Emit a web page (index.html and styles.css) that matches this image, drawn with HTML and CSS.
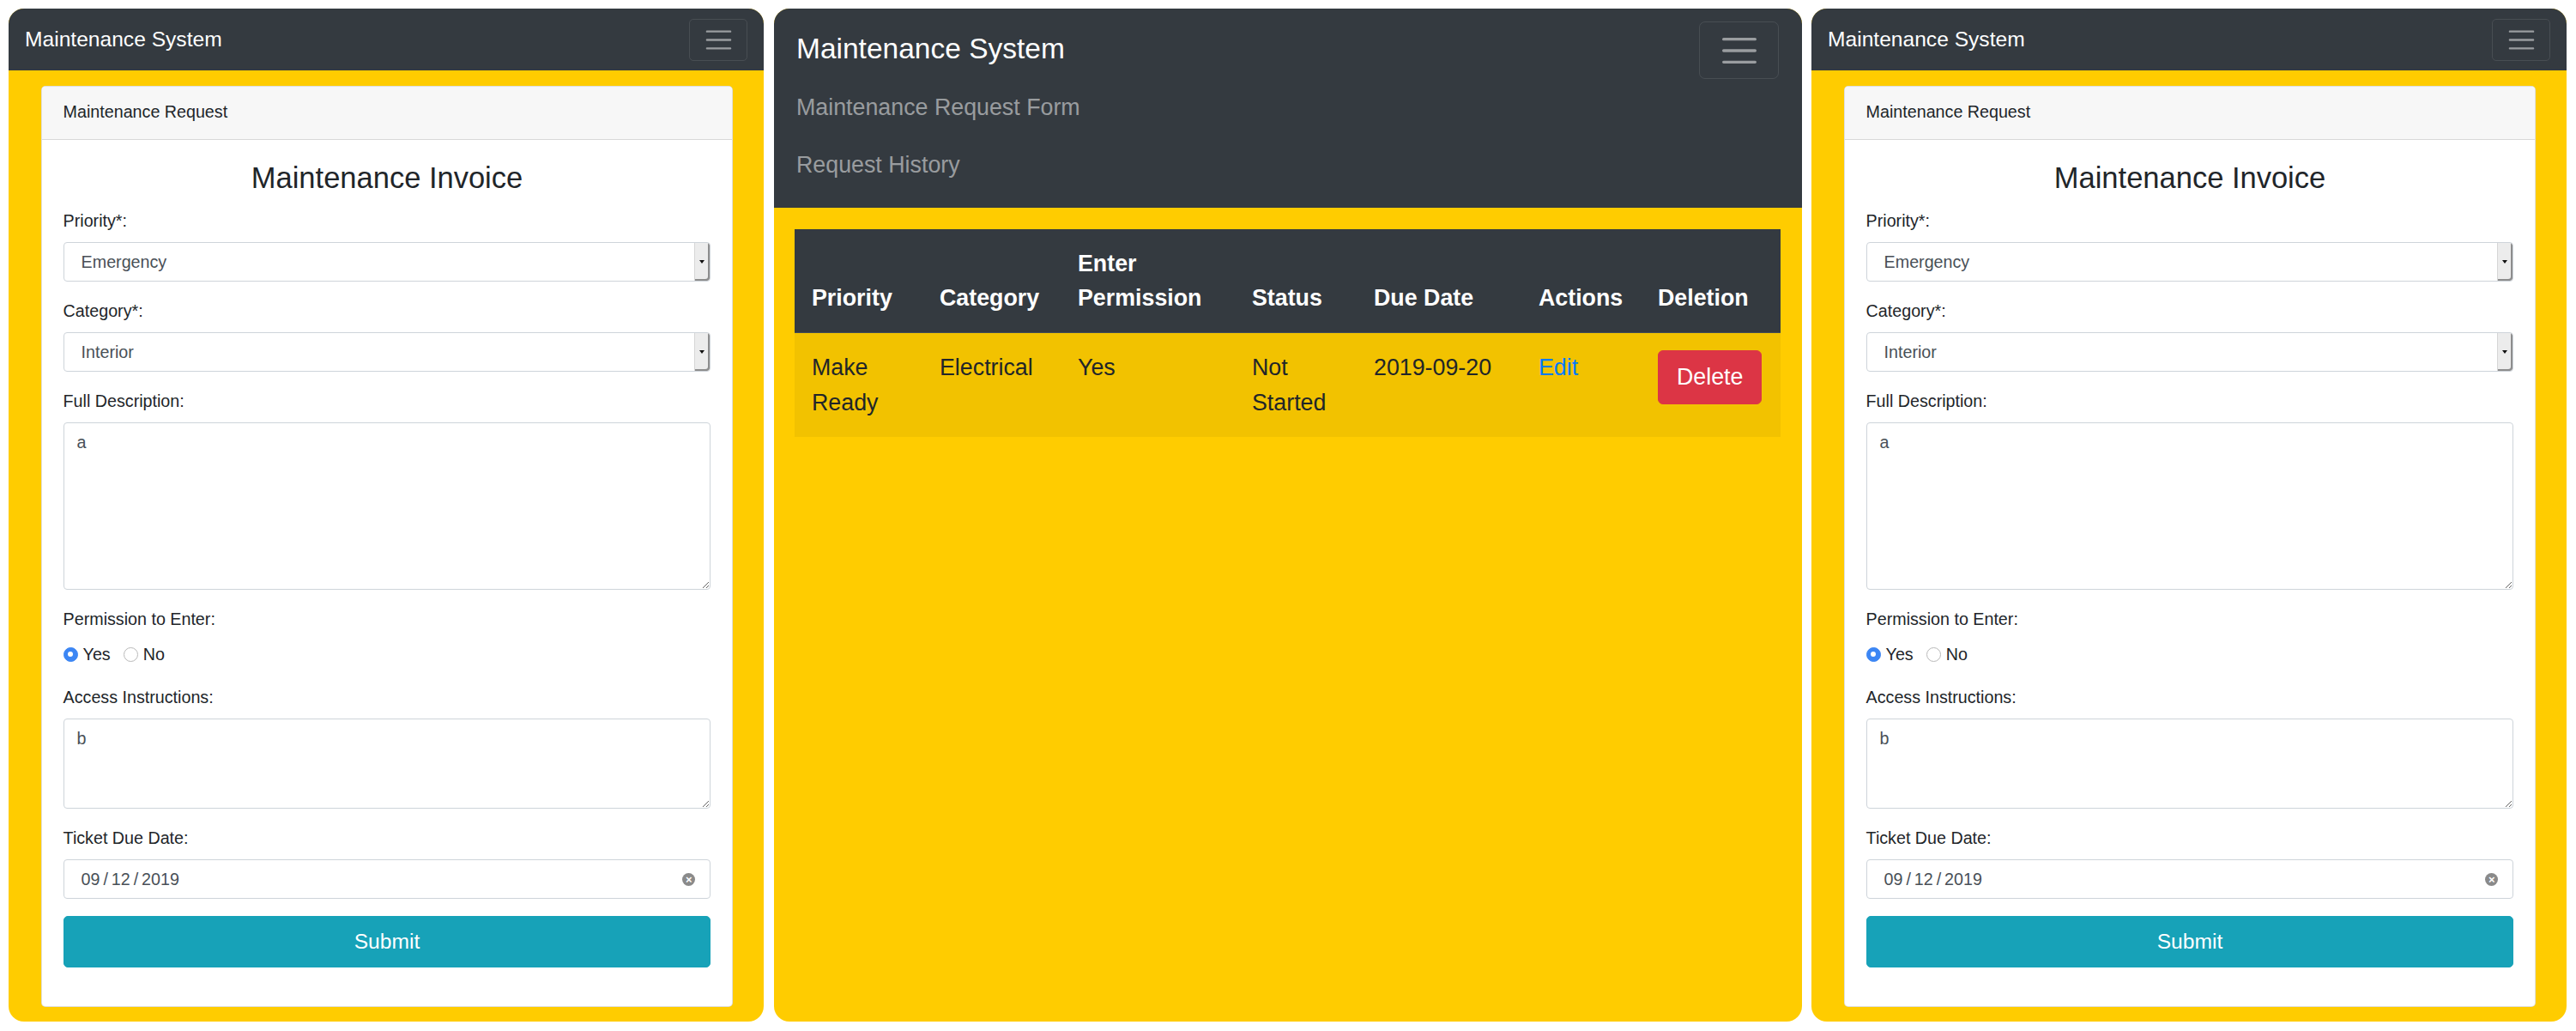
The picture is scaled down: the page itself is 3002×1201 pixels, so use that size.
FILE: index.html
```html
<!DOCTYPE html>
<html lang="en">
<head>
<meta charset="utf-8">
<title>Maintenance System</title>
<link rel="stylesheet" href="styles.css">
</head>
<body>
<div class="screens">

  <section class="phone">
    <nav class="navbar">
      <span class="brand">Maintenance System</span>
      <span class="toggler"><svg class="toggler-icon" viewBox="0 0 30 30"><path d="M4 7h22M4 15h22M4 23h22"/></svg></span>
    </nav>
    <main class="phone-body">
      <div class="card">
        <div class="card-header">Maintenance Request</div>
        <div class="card-body">
          <h3 class="title">Maintenance Invoice</h3>
          <div class="group">
            <div class="label">Priority*:</div>
            <div class="select"><span class="select-value">Emergency</span><span class="select-btn"><span class="arrow"></span></span></div>
          </div>
          <div class="group">
            <div class="label">Category*:</div>
            <div class="select"><span class="select-value">Interior</span><span class="select-btn"><span class="arrow"></span></span></div>
          </div>
          <div class="group">
            <div class="label">Full Description:</div>
            <textarea class="textarea tall" readonly>a</textarea>
          </div>
          <div class="group">
            <div class="label">Permission to Enter:</div>
            <div class="radios">
              <span class="radio checked"></span><span class="radio-label">Yes</span>
              <span class="radio"></span><span class="radio-label">No</span>
            </div>
          </div>
          <div class="group">
            <div class="label">Access Instructions:</div>
            <textarea class="textarea short" readonly>b</textarea>
          </div>
          <div class="group">
            <div class="label">Ticket Due Date:</div>
            <div class="date"><span class="date-value">09&#8201;/&#8201;12&#8201;/&#8201;2019</span><span class="clear">&#215;</span></div>
          </div>
          <div class="submit">Submit</div>
        </div>
      </div>
    </main>
  </section>

  <section class="tablet">
    <nav class="navbar-lg">
      <div class="nav-top">
        <span class="brand-lg">Maintenance System</span>
        <span class="toggler-lg"><svg class="toggler-icon-lg" viewBox="0 0 30 30"><path d="M4 7h22M4 15h22M4 23h22"/></svg></span>
      </div>
      <div class="nav-link">Maintenance Request Form</div>
      <div class="nav-link">Request History</div>
    </nav>
    <main class="tablet-body">
      <table class="table">
        <thead>
          <tr>
            <th class="c1">Priority</th>
            <th class="c2">Category</th>
            <th class="c3">Enter Permission</th>
            <th class="c4">Status</th>
            <th class="c5">Due Date</th>
            <th class="c6">Actions</th>
            <th class="c7">Deletion</th>
          </tr>
        </thead>
        <tbody>
          <tr>
            <td>Make Ready</td>
            <td>Electrical</td>
            <td>Yes</td>
            <td>Not Started</td>
            <td>2019-09-20</td>
            <td><span class="edit">Edit</span></td>
            <td><span class="delete">Delete</span></td>
          </tr>
        </tbody>
      </table>
    </main>
  </section>

  <section class="phone">
    <nav class="navbar">
      <span class="brand">Maintenance System</span>
      <span class="toggler"><svg class="toggler-icon" viewBox="0 0 30 30"><path d="M4 7h22M4 15h22M4 23h22"/></svg></span>
    </nav>
    <main class="phone-body">
      <div class="card">
        <div class="card-header">Maintenance Request</div>
        <div class="card-body">
          <h3 class="title">Maintenance Invoice</h3>
          <div class="group">
            <div class="label">Priority*:</div>
            <div class="select"><span class="select-value">Emergency</span><span class="select-btn"><span class="arrow"></span></span></div>
          </div>
          <div class="group">
            <div class="label">Category*:</div>
            <div class="select"><span class="select-value">Interior</span><span class="select-btn"><span class="arrow"></span></span></div>
          </div>
          <div class="group">
            <div class="label">Full Description:</div>
            <textarea class="textarea tall" readonly>a</textarea>
          </div>
          <div class="group">
            <div class="label">Permission to Enter:</div>
            <div class="radios">
              <span class="radio checked"></span><span class="radio-label">Yes</span>
              <span class="radio"></span><span class="radio-label">No</span>
            </div>
          </div>
          <div class="group">
            <div class="label">Access Instructions:</div>
            <textarea class="textarea short" readonly>b</textarea>
          </div>
          <div class="group">
            <div class="label">Ticket Due Date:</div>
            <div class="date"><span class="date-value">09&#8201;/&#8201;12&#8201;/&#8201;2019</span><span class="clear">&#215;</span></div>
          </div>
          <div class="submit">Submit</div>
        </div>
      </div>
    </main>
  </section>

</div>
</body>
</html>
```

FILE: styles.css
```css
* { box-sizing: border-box; }

html, body {
  margin: 0;
  padding: 0;
  background: #ffffff;
}

body {
  font-family: "Liberation Sans", Arial, sans-serif;
  color: #212529;
  padding: 10px 11px 11px 10px;
}

.screens {
  display: flex;
  align-items: stretch;
  height: 1180px;
}

/* ---------- side (phone) panels ---------- */
.phone {
  width: 880px;
  flex: 0 0 880px;
  height: 1180px;
  border-radius: 18px;
  overflow: hidden;
  background: #ffcc00;
  display: flex;
  flex-direction: column;
  font-size: 19.7px;
  line-height: 1.5;
}

.phone + .tablet { margin-left: 12px; }
.tablet + .phone { margin-left: 11px; }

.navbar {
  background: #343a40;
  height: 72px;
  padding: 12px 19px 11px 19px;
  display: flex;
  align-items: center;
  justify-content: space-between;
}

.brand {
  color: #ffffff;
  font-size: 24.6px;
  line-height: 37px;
  margin-top: -3px;
}

.toggler {
  width: 68px;
  height: 49px;
  border: 1px solid rgba(255, 255, 255, 0.1);
  border-radius: 5px;
  display: flex;
  align-items: center;
  justify-content: center;
}

.toggler-icon {
  width: 37px;
  height: 37px;
  fill: none;
  stroke: rgba(255, 255, 255, 0.5);
  stroke-width: 2;
  stroke-linecap: round;
}

.phone-body {
  flex: 1;
  padding: 18px 36px 18px 38px;
}

.card {
  background: #ffffff;
  border: 1px solid rgba(0, 0, 0, 0.125);
  border-radius: 5px;
  overflow: hidden;
}

.card-header {
  background: #f7f7f7;
  border-bottom: 1px solid rgba(0, 0, 0, 0.125);
  padding: 15px 24.6px 16px;
  line-height: 29.5px;
  font-size: 19.7px;
}

.card-body {
  padding: 24.6px 24.6px 45px;
}

.title {
  margin: 0 0 15px;
  font-size: 34.5px;
  line-height: 41px;
  font-weight: 400;
  text-align: center;
  color: #212529;
}

.group { margin-bottom: 19.7px; }

.label {
  line-height: 29.5px;
  margin-bottom: 9.8px;
}

.select {
  display: flex;
  height: 46px;
  border: 1px solid #ced4da;
  border-radius: 4px;
  background: #ffffff;
  overflow: hidden;
}

.select-value {
  flex: 1;
  padding-left: 20px;
  line-height: 44px;
  color: #495057;
}

.select-btn {
  width: 18px;
  background: #ececec;
  border-left: 1px solid #d6d6d6;
  box-shadow: inset -2px -2px 0 #8d8d8d;
  border-radius: 0 3px 3px 0;
  display: flex;
  align-items: center;
  justify-content: center;
  padding-right: 2px;
}

.arrow {
  width: 0;
  height: 0;
  border-left: 3.5px solid transparent;
  border-right: 3.5px solid transparent;
  border-top: 4px solid #111111;
}

.textarea {
  display: block;
  width: 100%;
  border: 1px solid #ced4da;
  border-radius: 4px;
  padding: 7.4px 15px;
  font-family: "Liberation Sans", Arial, sans-serif;
  font-size: 19.7px;
  line-height: 29.5px;
  color: #495057;
  background: #ffffff;
  outline: none;
  resize: vertical;
}

.textarea.tall { height: 195px; }
.textarea.short { height: 105px; }

.radios {
  display: flex;
  align-items: center;
  height: 32px;
}

.radio {
  width: 17px;
  height: 17px;
  border-radius: 50%;
  border: 1px solid #b9b9b9;
  background: #ffffff;
  margin-right: 6px;
}

.radio.checked {
  background: #3c86f4;
  border-color: #3c86f4;
  position: relative;
}

.radio.checked::after {
  content: "";
  position: absolute;
  left: 50%;
  top: 50%;
  width: 6px;
  height: 6px;
  margin: -3px 0 0 -3px;
  border-radius: 50%;
  background: #ffffff;
}

.radio-label { margin-right: 15px; }

.date {
  height: 46px;
  border: 1px solid #ced4da;
  border-radius: 4px;
  display: flex;
  align-items: center;
  justify-content: space-between;
  padding: 0 17px 0 20px;
}

.date-value { color: #495057; }

.clear {
  width: 15px;
  height: 15px;
  border-radius: 50%;
  background: #8a8a8a;
  color: #ffffff;
  font-size: 13px;
  line-height: 15px;
  text-align: center;
  font-weight: 700;
}

.submit {
  height: 60px;
  background: #17a2b8;
  border: 1px solid #17a2b8;
  border-radius: 5px;
  color: #ffffff;
  font-size: 24.6px;
  line-height: 58px;
  text-align: center;
}

/* ---------- middle (tablet) panel ---------- */
.tablet {
  width: 1198px;
  flex: 0 0 1198px;
  height: 1180px;
  border-radius: 18px;
  overflow: hidden;
  background: #ffcc00;
  display: flex;
  flex-direction: column;
  font-size: 26.8px;
  line-height: 1.5;
}

.navbar-lg {
  background: #343a40;
  padding: 15px 27px 16px 26px;
}

.nav-top {
  display: flex;
  align-items: center;
  justify-content: space-between;
  height: 67px;
}

.brand-lg {
  color: #ffffff;
  font-size: 33.5px;
  line-height: 50px;
  margin-top: -4px;
}

.toggler-lg {
  width: 93px;
  height: 67px;
  border: 1px solid rgba(255, 255, 255, 0.1);
  border-radius: 7px;
  display: flex;
  align-items: center;
  justify-content: center;
}

.toggler-icon-lg {
  width: 50px;
  height: 50px;
  fill: none;
  stroke: rgba(255, 255, 255, 0.5);
  stroke-width: 2;
  stroke-linecap: round;
}

.nav-link {
  color: rgba(255, 255, 255, 0.5);
  padding: 13.4px 0;
  line-height: 40.2px;
  font-size: 26.8px;
}

.tablet-body {
  flex: 1;
  padding: 25px 25px 0 24px;
}

.table {
  width: 1149px;
  border-collapse: collapse;
  table-layout: fixed;
  color: #212529;
}

.table th,
.table td {
  padding: 20px;
  line-height: 40.2px;
  text-align: left;
}

.table th {
  background: #343a40;
  color: #ffffff;
  font-weight: 700;
  vertical-align: bottom;
  border-bottom: 1px solid #454d55;
}

.table td {
  vertical-align: top;
  background: #f2c200;
}

.c1 { width: 149px; }
.c2 { width: 161px; }
.c3 { width: 203px; }
.c4 { width: 142px; }
.c5 { width: 192px; }
.c6 { width: 139px; }
.c7 { width: 163px; }

.edit { color: #007bff; }

.delete {
  display: inline-block;
  background: #dc3545;
  border: 1px solid #dc3545;
  border-radius: 6px;
  color: #ffffff;
  padding: 10px 21px;
  line-height: 40.2px;
  white-space: nowrap;
}
```
